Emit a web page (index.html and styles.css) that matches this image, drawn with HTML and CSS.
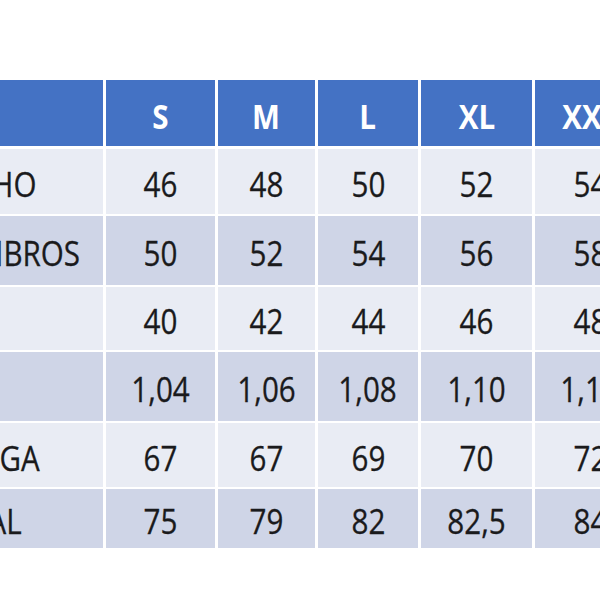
FILE: index.html
```html
<!DOCTYPE html>
<html lang="es">
<head>
<meta charset="utf-8">
<title>Tabla de tallas</title>
<link rel="stylesheet" href="styles.css">
</head>
<body>
<div class="page">
  <div class="table">
    <div class="cell head label"></div>
    <div class="cell head"><span class="t">S</span></div>
    <div class="cell head"><span class="t">M</span></div>
    <div class="cell head"><span class="t">L</span></div>
    <div class="cell head"><span class="t">XL</span></div>
    <div class="cell head"><span class="t">XXL</span></div>

    <div class="cell light label"><span class="t">ANCHO</span></div>
    <div class="cell light"><span class="t">46</span></div>
    <div class="cell light"><span class="t">48</span></div>
    <div class="cell light"><span class="t">50</span></div>
    <div class="cell light"><span class="t">52</span></div>
    <div class="cell light"><span class="t">54</span></div>

    <div class="cell dark label"><span class="t">HOMBROS</span></div>
    <div class="cell dark"><span class="t">50</span></div>
    <div class="cell dark"><span class="t">52</span></div>
    <div class="cell dark"><span class="t">54</span></div>
    <div class="cell dark"><span class="t">56</span></div>
    <div class="cell dark"><span class="t">58</span></div>

    <div class="cell light label"></div>
    <div class="cell light"><span class="t">40</span></div>
    <div class="cell light"><span class="t">42</span></div>
    <div class="cell light"><span class="t">44</span></div>
    <div class="cell light"><span class="t">46</span></div>
    <div class="cell light"><span class="t">48</span></div>

    <div class="cell dark label"></div>
    <div class="cell dark"><span class="t">1,04</span></div>
    <div class="cell dark"><span class="t">1,06</span></div>
    <div class="cell dark"><span class="t">1,08</span></div>
    <div class="cell dark"><span class="t">1,10</span></div>
    <div class="cell dark"><span class="t">1,12</span></div>

    <div class="cell light label"><span class="t">MANGA</span></div>
    <div class="cell light"><span class="t">67</span></div>
    <div class="cell light"><span class="t">67</span></div>
    <div class="cell light"><span class="t">69</span></div>
    <div class="cell light"><span class="t">70</span></div>
    <div class="cell light"><span class="t">72</span></div>

    <div class="cell dark label"><span class="t">TOTAL</span></div>
    <div class="cell dark"><span class="t">75</span></div>
    <div class="cell dark"><span class="t">79</span></div>
    <div class="cell dark"><span class="t">82</span></div>
    <div class="cell dark"><span class="t">82,5</span></div>
    <div class="cell dark"><span class="t">84</span></div>
  </div>
</div>
</body>
</html>
```

FILE: styles.css
```css
html, body {
  margin: 0;
  padding: 0;
  background: #ffffff;
}

body {
  width: 600px;
  height: 600px;
  overflow: hidden;
  font-family: "Open Sans", "Noto Sans", sans-serif;
  color: #1a1a1c;
}

.page {
  padding-top: 80px;
}

.table {
  display: grid;
  margin-left: -80px;
  width: max-content;
  grid-template-columns: 183px 109px 97px 100px 111px 110px;
  grid-template-rows: 67px 65px 69px 63px 69px 64px 59px;
  column-gap: 3px;
  row-gap: 2px;
}

.table .head {
  margin-bottom: 1px;
}

.cell {
  display: flex;
  align-items: center;
  justify-content: center;
  overflow: hidden;
  font-size: 34px;
  line-height: 1;
  padding-top: 5px;
  box-sizing: border-box;
  -webkit-text-stroke: 0.3px #1a1a1c;
}

.t {
  display: inline-block;
  transform: scaleX(0.87);
  white-space: nowrap;
}

.label {
  justify-content: flex-start;
  padding-left: 12px;
}

.label .t {
  transform-origin: left center;
}

.head {
  background: #4472c4;
  color: #ffffff;
  font-weight: 700;
  -webkit-text-stroke: 0;
}

.light {
  background: #e9ecf4;
}

.dark {
  background: #cfd5e7;
}
```
